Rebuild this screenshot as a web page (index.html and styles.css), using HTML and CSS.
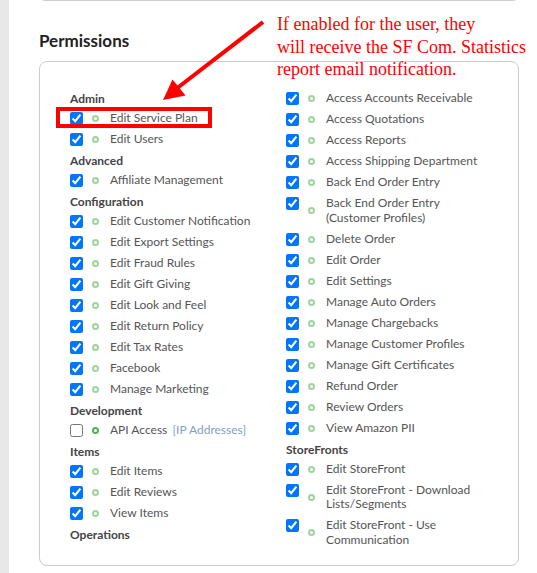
FILE: index.html
```html
<!DOCTYPE html>
<html>
<head>
<meta charset="utf-8">
<link rel="stylesheet" href="styles.css">
</head>
<body>
<div class="page">
  <div class="prev-card"></div>
  <h2 class="title">Permissions</h2>
  <div class="card">
    <div class="col">
      <div class="group">Admin</div>
      <label class="item hl"><input type="checkbox" checked><span class="dot"></span><span class="text">Edit Service Plan</span><span class="hl-box"></span></label>
      <label class="item"><input type="checkbox" checked><span class="dot"></span><span class="text">Edit Users</span></label>
      <div class="group">Advanced</div>
      <label class="item"><input type="checkbox" checked><span class="dot"></span><span class="text">Affiliate Management</span></label>
      <div class="group">Configuration</div>
      <label class="item"><input type="checkbox" checked><span class="dot"></span><span class="text">Edit Customer Notification</span></label>
      <label class="item"><input type="checkbox" checked><span class="dot"></span><span class="text">Edit Export Settings</span></label>
      <label class="item"><input type="checkbox" checked><span class="dot"></span><span class="text">Edit Fraud Rules</span></label>
      <label class="item"><input type="checkbox" checked><span class="dot"></span><span class="text">Edit Gift Giving</span></label>
      <label class="item"><input type="checkbox" checked><span class="dot"></span><span class="text">Edit Look and Feel</span></label>
      <label class="item"><input type="checkbox" checked><span class="dot"></span><span class="text">Edit Return Policy</span></label>
      <label class="item"><input type="checkbox" checked><span class="dot"></span><span class="text">Edit Tax Rates</span></label>
      <label class="item"><input type="checkbox" checked><span class="dot"></span><span class="text">Facebook</span></label>
      <label class="item"><input type="checkbox" checked><span class="dot"></span><span class="text">Manage Marketing</span></label>
      <div class="group">Development</div>
      <label class="item"><input type="checkbox"><span class="dot active"></span><span class="text">API Access <a class="link">[IP Addresses]</a></span></label>
      <div class="group">Items</div>
      <label class="item"><input type="checkbox" checked><span class="dot"></span><span class="text">Edit Items</span></label>
      <label class="item"><input type="checkbox" checked><span class="dot"></span><span class="text">Edit Reviews</span></label>
      <label class="item"><input type="checkbox" checked><span class="dot"></span><span class="text">View Items</span></label>
      <div class="group">Operations</div>
    </div>
    <div class="col">
      <label class="item"><input type="checkbox" checked><span class="dot"></span><span class="text">Access Accounts Receivable</span></label>
      <label class="item"><input type="checkbox" checked><span class="dot"></span><span class="text">Access Quotations</span></label>
      <label class="item"><input type="checkbox" checked><span class="dot"></span><span class="text">Access Reports</span></label>
      <label class="item"><input type="checkbox" checked><span class="dot"></span><span class="text">Access Shipping Department</span></label>
      <label class="item"><input type="checkbox" checked><span class="dot"></span><span class="text">Back End Order Entry</span></label>
      <label class="item"><input type="checkbox" checked><span class="dot"></span><span class="text">Back End Order Entry<br>(Customer Profiles)</span></label>
      <label class="item"><input type="checkbox" checked><span class="dot"></span><span class="text">Delete Order</span></label>
      <label class="item"><input type="checkbox" checked><span class="dot"></span><span class="text">Edit Order</span></label>
      <label class="item"><input type="checkbox" checked><span class="dot"></span><span class="text">Edit Settings</span></label>
      <label class="item"><input type="checkbox" checked><span class="dot"></span><span class="text">Manage Auto Orders</span></label>
      <label class="item"><input type="checkbox" checked><span class="dot"></span><span class="text">Manage Chargebacks</span></label>
      <label class="item"><input type="checkbox" checked><span class="dot"></span><span class="text">Manage Customer Profiles</span></label>
      <label class="item"><input type="checkbox" checked><span class="dot"></span><span class="text">Manage Gift Certificates</span></label>
      <label class="item"><input type="checkbox" checked><span class="dot"></span><span class="text">Refund Order</span></label>
      <label class="item"><input type="checkbox" checked><span class="dot"></span><span class="text">Review Orders</span></label>
      <label class="item"><input type="checkbox" checked><span class="dot"></span><span class="text">View Amazon PII</span></label>
      <div class="group">StoreFronts</div>
      <label class="item"><input type="checkbox" checked><span class="dot"></span><span class="text">Edit StoreFront</span></label>
      <label class="item"><input type="checkbox" checked><span class="dot"></span><span class="text">Edit StoreFront - Download<br>Lists/Segments</span></label>
      <label class="item"><input type="checkbox" checked><span class="dot"></span><span class="text">Edit StoreFront - Use<br>Communication</span></label>
    </div>
  </div>
</div>
<p class="note">If enabled for the user, they<br>will receive the SF Com. Statistics<br>report email notification.</p>
<svg class="arrow" width="537" height="573" viewBox="0 0 537 573">
  <line x1="263" y1="22" x2="176" y2="89" stroke="#ff0000" stroke-width="4"/>
  <polygon points="163,100 172.5,79.5 185.5,95.5" fill="#ff0000"/>
</svg>
</body>
</html>
```

FILE: styles.css
```css
html, body {
  margin: 0;
  padding: 0;
}
body {
  background: #e8e8e8;
  font-family: Lato, "Open Sans", sans-serif;
  position: relative;
  width: 537px;
  height: 573px;
  overflow: hidden;
}
.page {
  display: flow-root;
  margin-left: 9px;
  background: #ffffff;
  height: 573px;
  padding: 0 18px 0 30px;
  box-sizing: border-box;
}
.prev-card {
  height: 11px;
  margin-top: -10px;
  border: 1px solid #cfcfcf;
  border-radius: 8px;
  box-sizing: border-box;
}
.title {
  margin: 30px 0 10px 0;
  font-size: 17px;
  line-height: 20px;
  font-weight: 700;
  color: #222;
}
.card {
  border: 1px solid #cccccc;
  border-radius: 8px;
  padding: 26px 0 14px 30px;
  display: grid;
  grid-template-columns: 216px 1fr;
}
.col {
  display: flex;
  flex-direction: column;
}
.group {
  font-size: 12px;
  line-height: 15px;
  padding: 3px 0 2px 0;
  font-weight: 700;
  color: #444;
}
.item {
  display: flex;
  align-items: center;
  padding: 3.25px 0;
  font-size: 12px;
  line-height: 14.5px;
  color: #555;
  position: relative;
}
.item input {
  margin: 1px 0 0 0;
  width: 13px;
  height: 13px;
  align-self: flex-start;
  flex: none;
}
.dot {
  flex: none;
  width: 7px;
  height: 7px;
  box-sizing: border-box;
  border: 2px solid #9fd39f;
  border-radius: 50%;
  margin: 0 11px 0 9px;
}
.dot.active {
  border-color: #52b152;
}
.text {
  flex: none;
}
.link {
  color: #7f9fc4;
  margin-left: 2px;
}
.hl-box {
  position: absolute;
  left: -14px;
  top: -1px;
  width: 156px;
  height: 21px;
  border: 4px solid #ff0000;
  box-sizing: border-box;
}
.note {
  position: absolute;
  left: 277px;
  top: 13px;
  margin: 0;
  font-family: "Liberation Serif", "Times New Roman", serif;
  font-size: 18px;
  line-height: 22.5px;
  color: #ff0000;
}
.arrow {
  position: absolute;
  left: 0;
  top: 0;
}
```
